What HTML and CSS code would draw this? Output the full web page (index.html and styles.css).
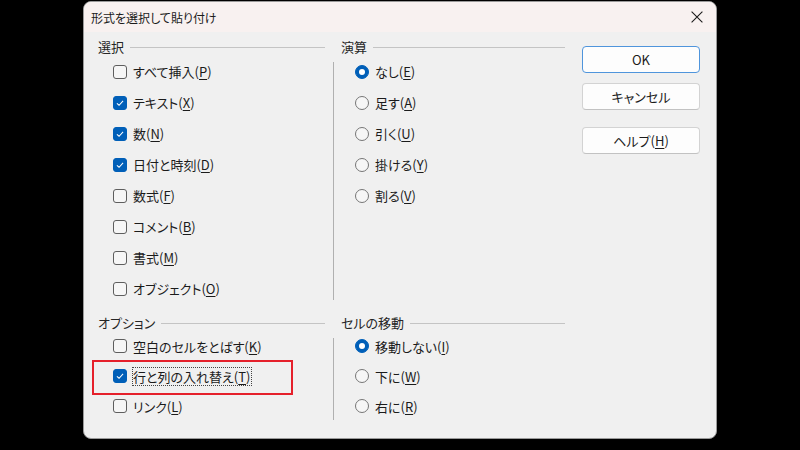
FILE: index.html
```html
<!DOCTYPE html>
<html lang="ja">
<head>
<meta charset="utf-8">
<title>形式を選択して貼り付け</title>
<link rel="stylesheet" href="styles.css">
</head>
<body>
<div class="dialog">
  <header class="titlebar">
    <span class="title">形式を選択して貼り付け</span>
    <span class="close"><svg width="12" height="12" viewBox="0 0 12 12"><path d="M0.6 0.6L11.4 11.4M11.4 0.6L0.6 11.4" stroke="#1c1c1c" stroke-width="1.1" fill="none"/></svg></span>
  </header>
  <div class="content">
    <div class="groups">
      <div class="ghead col1 row1"><span>選択</span><i></i></div>
      <div class="ghead col3 row1"><span>演算</span><i></i></div>

      <div class="gbody col1 row2 left">
        <div class="item r31"><span class="cb"></span><span>すべて挿入(<u>P</u>)</span></div>
        <div class="item r31"><span class="cb on"><svg viewBox="0 0 14 14"><path d="M3.4 7.3L5.9 9.6L10.6 4.6" stroke="#fff" stroke-width="1.2" fill="none"/></svg></span><span>テキスト(<u>X</u>)</span></div>
        <div class="item r31"><span class="cb on"><svg viewBox="0 0 14 14"><path d="M3.4 7.3L5.9 9.6L10.6 4.6" stroke="#fff" stroke-width="1.2" fill="none"/></svg></span><span>数(<u>N</u>)</span></div>
        <div class="item r31"><span class="cb on"><svg viewBox="0 0 14 14"><path d="M3.4 7.3L5.9 9.6L10.6 4.6" stroke="#fff" stroke-width="1.2" fill="none"/></svg></span><span>日付と時刻(<u>D</u>)</span></div>
        <div class="item r31"><span class="cb"></span><span>数式(<u>F</u>)</span></div>
        <div class="item r31"><span class="cb"></span><span>コメント(<u>B</u>)</span></div>
        <div class="item r31"><span class="cb"></span><span>書式(<u>M</u>)</span></div>
        <div class="item r31"><span class="cb"></span><span>オブジェクト(<u>O</u>)</span></div>
      </div>
      <div class="sep col2 row2 sep-top"></div>
      <div class="gbody col3 row2 right">
        <div class="item r31"><span class="rb on"></span><span>なし(<u>E</u>)</span></div>
        <div class="item r31"><span class="rb"></span><span>足す(<u>A</u>)</span></div>
        <div class="item r31"><span class="rb"></span><span>引く(<u>U</u>)</span></div>
        <div class="item r31"><span class="rb"></span><span>掛ける(<u>Y</u>)</span></div>
        <div class="item r31"><span class="rb"></span><span>割る(<u>V</u>)</span></div>
      </div>

      <div class="ghead col1 row4"><span>オプション</span><i></i></div>
      <div class="ghead col3 row4"><span>セルの移動</span><i></i></div>

      <div class="gbody col1 row5 left">
        <div class="item r30"><span class="cb"></span><span>空白のセルをとばす(<u>K</u>)</span></div>
        <div class="item r30"><span class="cb on"><svg viewBox="0 0 14 14"><path d="M3.4 7.3L5.9 9.6L10.6 4.6" stroke="#fff" stroke-width="1.2" fill="none"/></svg></span><span class="focus">行と列の入れ替え(<u>T</u>)</span></div>
        <div class="item r30"><span class="cb"></span><span>リンク(<u>L</u>)</span></div>
      </div>
      <div class="sep col2 row5 sep-bot"></div>
      <div class="gbody col3 row5 right">
        <div class="item r30"><span class="rb on"></span><span>移動しない(<u>I</u>)</span></div>
        <div class="item r30"><span class="rb"></span><span>下に(<u>W</u>)</span></div>
        <div class="item r30"><span class="rb"></span><span>右に(<u>R</u>)</span></div>
      </div>
    </div>
    <div class="buttons">
      <button class="btn ok">OK</button>
      <button class="btn cancel">キャンセル</button>
      <button class="btn help">ヘルプ(<u>H</u>)</button>
    </div>
  </div>
  <div class="annot"></div>
</div>
</body>
</html>
```

FILE: styles.css
```css
* { box-sizing: border-box; }
html, body { margin: 0; padding: 0; }
body {
  background: #000;
  width: 800px;
  height: 450px;
  overflow: hidden;
  font-family: "Noto Sans CJK JP", "Noto Sans", sans-serif;
  font-feature-settings: "palt" 1;
  color: #1b1b1b;
  font-size: 13px;
}
.dialog {
  position: relative;
  margin: 1px 0 0 83px;
  width: 634px;
  height: 438px;
  background: #f0f0f0;
  border: 1px solid #9a9a9a;
  border-radius: 8px;
  overflow: hidden;
}
.titlebar {
  height: 30px;
  background: #f8f1f0;
  display: flex;
  align-items: center;
  justify-content: space-between;
  padding: 0 13px 0 7px;
}
.title { font-size: 12px; color: #1b1b1b; }
.close { display: flex; width: 12px; height: 12px; }
.content {
  display: flex;
  padding: 6px 0 0 14px;
}
.groups {
  display: grid;
  grid-template-columns: 227px 16px 224px;
  grid-template-rows: 18px 248px 11px 16px 90px;
}
.col1 { grid-column: 1; }
.col2 { grid-column: 2; }
.col3 { grid-column: 3; }
.row1 { grid-row: 1; }
.row2 { grid-row: 2; }
.row4 { grid-row: 4; }
.row5 { grid-row: 5; }
.ghead {
  display: flex;
  align-items: center;
  color: #262626;
  line-height: 16px;
}
.ghead i {
  flex: 1;
  height: 1px;
  background: #c4c4c4;
  margin-left: 6px;
}
.gbody { display: flex; flex-direction: column; }
.gbody.left { padding-left: 15px; }
.gbody.right { padding-left: 14px; }
.item {
  display: flex;
  align-items: center;
  white-space: nowrap;
}
.r31 { height: 31px; }
.r30 { height: 30px; }
.sep { justify-self: center; width: 1px; background: #b0b0b0; }
.sep-top { margin: 6px 0 4px; }
.sep-bot { margin: 7px 0 1px; }
.cb {
  width: 14px;
  height: 14px;
  flex: none;
  border: 1px solid #5e5e5e;
  border-radius: 3px;
  background: #f6f6f6;
  margin-right: 6px;
  display: flex;
}
.cb.on { background: #005fb8; border-color: #005fb8; }
.cb svg { width: 12px; height: 12px; }
.rb {
  width: 14px;
  height: 14px;
  flex: none;
  border: 1px solid #767676;
  border-radius: 50%;
  background: #f6f6f6;
  margin-right: 6px;
  display: flex;
  align-items: center;
  justify-content: center;
}
.rb.on { background: #005fb8; border-color: #005fb8; }
.rb.on::after {
  content: "";
  width: 6px;
  height: 6px;
  border-radius: 50%;
  background: #fff;
}
u { text-decoration-thickness: 1px; text-underline-offset: 2px; }
.focus {
  border: 1px dotted #444;
  line-height: 17px;
  padding: 0 1px 0 0;
  margin-left: -1px;
}
.buttons {
  display: flex;
  flex-direction: column;
  margin-left: 17px;
  padding-top: 8px;
}
.btn {
  width: 118px;
  height: 27px;
  font-family: inherit;
  font-feature-settings: "palt" 1;
  font-size: 13px;
  color: #1b1b1b;
  background: #fdfdfd;
  border: 1px solid #d3d3d3;
  border-bottom-color: #c2c2c2;
  border-radius: 4px;
  padding: 0;
}
.btn.ok { border: 1px solid #4f95dc; }
.btn.cancel { margin-top: 10px; }
.btn.help { margin-top: 17px; }
.annot {
  position: absolute;
  left: 8px;
  top: 358px;
  width: 201px;
  height: 35px;
  border: 2px solid #e5202b;
}
```
